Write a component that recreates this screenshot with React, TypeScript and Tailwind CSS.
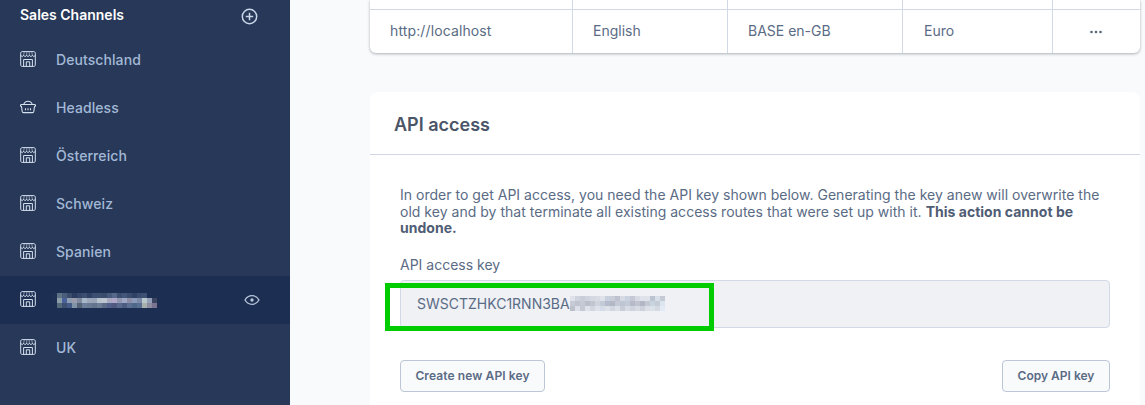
import { ReactNode } from "react";

function StoreIcon() {
  return (
    <svg width="16" height="16" viewBox="0 0 16 16" fill="none" stroke="#d5e0ee" strokeWidth="1" className="-mt-[2px] shrink-0">
      <path d="M2.200.6h11.600c.9 0 1.500.6 1.500 1.500v11.800c0 .9-.6 1.500-1.500 1.500H2.200c-.9 0-1.500-.6-1.500-1.500V2.100C.7 1.200 1.300.6 2.200.6z" />
      <path d="M.7 4.300c.7 1.500 2.300 1.500 2.900 0 .7 1.500 2.400 1.500 3 0 .7 1.500 2.100 1.500 2.800 0 .6 1.500 2.300 1.500 3 0 .6 1.500 2.200 1.500 2.900 0" />
      <path d="M4.300.6 3.600 4.300M6.900.6 6.600 4.300M9.100.6 9.400 4.300M11.700.6l.7 3.700" strokeOpacity="0.55" />
      <path d="M3.600 15.400V8.500h8.800v6.900M6.300 15.400V10.800h3.400v4.600" />
    </svg>
  );
}

function BasketIcon() {
  return (
    <svg width="16" height="16" viewBox="0 0 16 16" fill="none" stroke="#d5e0ee" strokeWidth="1.100" className="-mt-[2px] shrink-0">
      <path d="M1.500 5.500h13c.6 0 1 .4 1 1s-.4 1-1 1l-.7 5c-.1.700-.6 1.100-1.300 1.100H3.500c-.7 0-1.200-.4-1.300-1.100l-.7-5c-.6 0-1-.4-1-1s.4-1 1-1z" />
      <path d="M3.800 5.500C4.400 3.300 5.500 2.300 8 2.300s3.600 1 4.200 3.200M5.500 9.300v2M8 9.300v2M10.500 9.300v2" />
    </svg>
  );
}

// mosaic blocks standing in for the pixelated parts of the screenshot
const sidebarMosaic = [
  ["#1f3154", "#5f7384", "#4a5d7d", "#3b4c6b", "#2a3c60", "#344669", "#3d4e70", "#2f4165", "#3d4f70", "#3d4f70", "#3a4b6d", "#475a7c", "#56678a", "#3c4e70", "#44557a", "#3a4c6e", "#2f4165", "#3b4d70", "#3f5073", "#1c2e51", "#1c2e51"],
  ["#1e3053", "#8a9fa8", "#4a6098", "#8d9cb0", "#9a9cad", "#7f8aa0", "#a8b6ca", "#9ba6ba", "#9aa4b8", "#b8c2cc", "#bcc5d0", "#a8a8c0", "#b0a8c8", "#8f97b0", "#9ea8c4", "#8c8ca6", "#8a9ab8", "#7c8aa8", "#b8c8cc", "#94a0b8", "#3a4560"],
  ["#1c2e51", "#56697a", "#3d5072", "#445a88", "#8094a8", "#566276", "#6d7f98", "#6a7a92", "#64748c", "#6c7e96", "#5c6c88", "#50608a", "#4e5a80", "#5a6a8c", "#4c5c80", "#5c7094", "#4e688c", "#5a7090", "#a8b0ac", "#8c8ea0", "#7a7490"],
];

const keyMosaic = [
  ["#dfe2ea", "#cfd3dd", "#c8cdd8", "#cfd3dd", "#d5d8e1", "#d8dbe3", "#dfe2ea", "#c8d0de", "#c9cdd8", "#bec2cf", "#d6dae3", "#cbd2df", "#c5c9d5", "#d8dbe4", "#dfe2ea", "#dfe2ea", "#bcc4d1", "#d7e0e8", "#c5cad5"],
  ["#c7cbd6", "#bfc4d0", "#c6cad5", "#b9bec9", "#c1c5cf", "#cfd3db", "#c3cad8", "#b4bccd", "#b3b7c6", "#c5c9d6", "#bec6d3", "#c4cad6", "#b7bbc9", "#c0c4d0", "#b3b7c5", "#c4c8d2", "#c8d4de", "#c6ccd6", "#dce6f0"],
  ["#bcc0cb", "#dde0e8", "#c5c9d4", "#dfe2ea", "#d3d6df", "#dde1ea", "#d4dce8", "#dde1ea", "#d2d6e0", "#dce0e8", "#c9cdd8", "#d8dce6", "#cfd3de", "#d8dbe4", "#cdd1db", "#dcdfe7", "#d9e2e9", "#d5dae2", "#e2ebf4"],
];

function Mosaic({ rows, size }: { rows: string[][]; size: number }) {
  return (
    <div className="flex flex-col">
      {rows.map((row, i) => (
        <div key={i} className="flex">
          {row.map((c, j) => (
            <div key={j} style={{ width: size, height: size, background: c }} />
          ))}
        </div>
      ))}
    </div>
  );
}

function NavItem({ icon, label, active, trailing }: { icon: ReactNode; label: ReactNode; active?: boolean; trailing?: ReactNode }) {
  return (
    <div className={`flex h-12 items-center pl-5 pr-[30px] ${active ? "bg-[#1c2e51]" : ""}`}>
      {icon}
      <div className="ml-5 flex-1 text-sm font-medium tracking-[0.08px] text-[#a3b8d6]">{label}</div>
      {trailing}
    </div>
  );
}

function Cell({ className, children }: { className: string; children: ReactNode }) {
  return <div className={`flex h-full items-center border-r border-[#d1d9e6] pb-[2px] ${className}`}>{children}</div>;
}

export default function App() {
  return (
    <div className="relative flex h-[405px] w-[1145px] overflow-hidden bg-[#f9fafb] font-['Inter',sans-serif]">
      {/* Sidebar */}
      <aside className="h-full w-[290px] shrink-0 bg-[#273858]">
        <div className="flex h-[36px] items-start justify-between pl-5 pr-[32px] pt-[6px]">
          <span className="text-sm leading-[18px] font-semibold text-white">Sales Channels</span>
          <svg width="17" height="17" viewBox="0 0 17 17" fill="none" stroke="#c9d6e8" strokeWidth="1.500" className="mt-[2px]">
            <circle cx="8.500" cy="8.500" r="7.200" />
            <path d="M8.500 4.800v7.400M4.800 8.500h7.400" />
          </svg>
        </div>
        <NavItem icon={<StoreIcon />} label="Deutschland" />
        <NavItem icon={<BasketIcon />} label="Headless" />
        <NavItem icon={<StoreIcon />} label="Österreich" />
        <NavItem icon={<StoreIcon />} label="Schweiz" />
        <NavItem icon={<StoreIcon />} label="Spanien" />
        <NavItem
          active
          icon={<StoreIcon />}
          label={<div className="-ml-1"><Mosaic rows={sidebarMosaic} size={5} /></div>}
          trailing={
            <svg width="16" height="16" viewBox="0 0 16 16" fill="none" stroke="#b9c8dc" strokeWidth="1.300">
              <path d="M1 8c1.700-2.900 4-4.300 7-4.300s5.300 1.400 7 4.300c-1.700 2.900-4 4.300-7 4.300S2.700 10.900 1 8z" />
              <circle cx="8" cy="8" r="1.700" fill="#b9c8dc" stroke="none" />
            </svg>
          }
        />
        <NavItem icon={<StoreIcon />} label="UK" />
      </aside>

      {/* Content */}
      <main className="box-content h-full w-[770px] shrink-0 pl-[80px]">
        <div className="h-[53px] w-[770px] rounded-b-md bg-white shadow-[0_1px_3px_rgba(71,85,105,0.45)]">
          <div className="flex h-[9px]">
            <div className="h-full w-[203px] border-r border-[#d1d9e6]" />
            <div className="h-full w-[155px] border-r border-[#d1d9e6]" />
            <div className="h-full w-[175px] border-r border-[#d1d9e6]" />
            <div className="h-full w-[150px] border-r border-[#d1d9e6]" />
          </div>
          <div className="flex h-[44px] border-t border-[#d1d9e6] text-sm text-[#5a6b85]">
            <Cell className="w-[203px] pl-5 tracking-[0.12px]">http://localhost</Cell>
            <Cell className="w-[155px] pl-5">English</Cell>
            <Cell className="w-[175px] pl-5">BASE en-GB</Cell>
            <Cell className="w-[150px] pl-[21px]">Euro</Cell>
            <div className="flex h-full flex-1 items-center justify-center pr-[2px]">
              <svg width="14" height="4" viewBox="0 0 14 4" fill="#52667a">
                <circle cx="2.500" cy="2" r="1.300" />
                <circle cx="7" cy="2" r="1.300" />
                <circle cx="11.500" cy="2" r="1.300" />
              </svg>
            </div>
          </div>
        </div>

        <section className="mt-[39px] h-[400px] w-[770px] rounded-t-lg bg-white">
          <h2 className="flex h-[63px] items-center border-b border-[#d1d9e6] pt-1 pl-6 text-lg font-semibold text-[#4a5568]">API access</h2>
          <div className="px-[30px] pt-[32px]">
            <p className="text-sm leading-[16.500px] tracking-[0.02px] text-[#5a6b85]">
              In order to get API access, you need the API key shown below. Generating the key anew will overwrite the old key and by that terminate all existing access routes that were set up with it.{" "}
              <strong className="font-bold text-[#4f5d75]">This action cannot be undone.</strong>
            </p>
            <div className="mt-[19px] text-sm leading-[17px] text-[#5a6b85]">API access key</div>
            <div className="mt-[7px] flex h-[48px] items-center rounded-[4px] border border-[#d1d9e6] bg-[#eff1f5] pl-4 text-sm text-[#5a6b85]">
              <span>SWSCTZHKC1RNN3BA</span>
              <Mosaic rows={keyMosaic} size={5} />
            </div>
            <div className="mt-[32px] flex justify-between">
              <button className="h-8 w-[145px] rounded-[4px] border border-[#bcc6d6] bg-[#f9fafb] text-xs font-semibold tracking-[0.1px] text-[#5a6b85]">Create new API key</button>
              <button className="h-8 w-[108px] rounded-[4px] border border-[#bcc6d6] bg-[#f9fafb] text-xs font-semibold text-[#5a6b85]">Copy API key</button>
            </div>
          </div>
        </section>
      </main>

      {/* Green annotation drawn over the screenshot */}
      <div className="pointer-events-none absolute top-[283px] left-[385px] h-[48px] w-[329px] border-[5px] border-[#00cc00]" />
    </div>
  );
}
